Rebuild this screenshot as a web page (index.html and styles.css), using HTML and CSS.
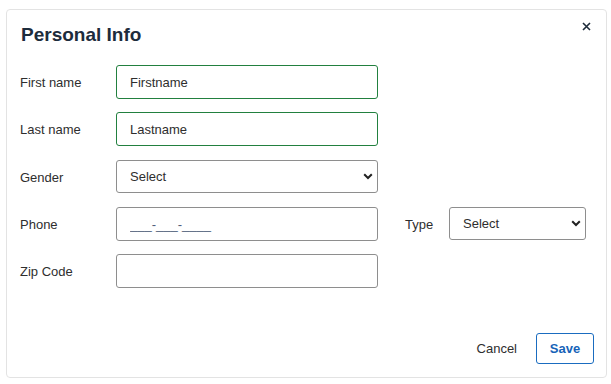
FILE: index.html
```html
<!DOCTYPE html>
<html lang="en">
  <head>
    <meta charset="UTF-8" />
    <title>Personal Info</title>
    <link rel="stylesheet" href="styles.css">
  </head>
  <body>
    <!-- Dialog -->
    <div class="dialog">
      <div class="dialog-header">
        <h2>Personal Info</h2>
        <button class="close-btn" aria-label="Close">
          <svg width="9" height="9" viewBox="0 0 9 9">
            <path d="M1 1 L8 8 M8 1 L1 8" stroke="#1d2b3a" stroke-width="1.6" />
          </svg>
        </button>
      </div>

      <form class="form">
        <div class="row">
          <label>First name</label>
          <input class="field valid" type="text" value="Firstname" />
        </div>
        <div class="row">
          <label>Last name</label>
          <input class="field valid" type="text" value="Lastname" />
        </div>
        <div class="row gender-row">
          <label>Gender</label>
          <div class="select-wrap">
            <select class="field">
              <option>Select</option>
            </select>
            <svg class="chevron" width="10" height="7" viewBox="0 0 10 7">
              <path d="M1.2 1.2 L5 5 L8.8 1.2" fill="none" stroke="#222" stroke-width="2" />
            </svg>
          </div>
        </div>
        <div class="row">
          <label>Phone</label>
          <input class="field" type="text" placeholder="___-___-____" />
          <label class="type-label">Type</label>
          <div class="select-wrap small">
            <select class="field">
              <option>Select</option>
            </select>
            <svg class="chevron" width="10" height="7" viewBox="0 0 10 7">
              <path d="M1.2 1.2 L5 5 L8.8 1.2" fill="none" stroke="#222" stroke-width="2" />
            </svg>
          </div>
        </div>
        <div class="row">
          <label>Zip Code</label>
          <input class="field" type="text" />
        </div>
      </form>

      <div class="dialog-footer">
        <button class="btn-cancel" type="button">Cancel</button>
        <button class="btn-save" type="button">Save</button>
      </div>
    </div>
  </body>
</html>
```

FILE: styles.css
```css
body {
  margin: 0;
  background: #fff;
  font-family: "Liberation Sans", Arial, sans-serif;
  font-size: 13px;
  color: #2e2e2e;
}

/* Dialog box */
.dialog {
  box-sizing: border-box;
  margin: 9px 4px 0 6px;
  height: 369px;
  border: 1px solid #e3e3e3;
  border-radius: 4px;
  display: flex;
  flex-direction: column;
  padding: 0 12px 13px 13px;
}

.dialog-header {
  display: flex;
  justify-content: space-between;
  align-items: flex-start;
  padding-top: 13px;
}

.dialog-header h2 {
  margin: 0 0 0 1px;
  font-size: 19px;
  line-height: 24px;
  font-weight: bold;
  color: #1d2c3c;
}

.close-btn {
  background: none;
  border: none;
  padding: 0;
  margin: -1px 3px 0 0;
  cursor: pointer;
  line-height: 0;
}

/* Form rows */
.form {
  display: flex;
  flex-direction: column;
  gap: 13px;
  margin-top: 18px;
}

.row {
  display: flex;
  align-items: center;
  height: 34px;
}

.row.gender-row {
  margin-top: 1px;
}

.row label {
  width: 96px;
  flex-shrink: 0;
  color: #2e2e2e;
}

.row .type-label {
  width: 44px;
  margin-left: 27px;
}

.field {
  box-sizing: border-box;
  width: 262px;
  height: 34px;
  border: 1px solid #8e8e8e;
  border-radius: 3px;
  padding: 0 13px;
  font-family: inherit;
  font-size: 13px;
  color: #2e2e2e;
  background: #fff;
  outline: none;
  flex-shrink: 0;
}

.field.valid {
  border-color: #22803f;
}

.field::placeholder {
  color: #50607a;
}

.select-wrap {
  position: relative;
  height: 34px;
  flex-shrink: 0;
}

.select-wrap select {
  appearance: none;
  -webkit-appearance: none;
  height: 33px;
}

.select-wrap.small select {
  width: 137px;
}

.chevron {
  position: absolute;
  right: 5px;
  top: 13px;
  pointer-events: none;
}

/* Footer buttons */
.dialog-footer {
  margin-top: auto;
  display: flex;
  justify-content: flex-end;
  align-items: center;
  gap: 9px;
}

.btn-cancel {
  background: none;
  border: none;
  padding: 0 10px;
  font-family: inherit;
  font-size: 13px;
  color: #2e2e2e;
  cursor: pointer;
}

.btn-save {
  box-sizing: border-box;
  width: 58px;
  height: 31px;
  background: #fff;
  border: 1px solid #1a6cc0;
  border-radius: 3px;
  font-family: inherit;
  font-size: 13px;
  font-weight: bold;
  color: #1763b8;
  cursor: pointer;
}
```
